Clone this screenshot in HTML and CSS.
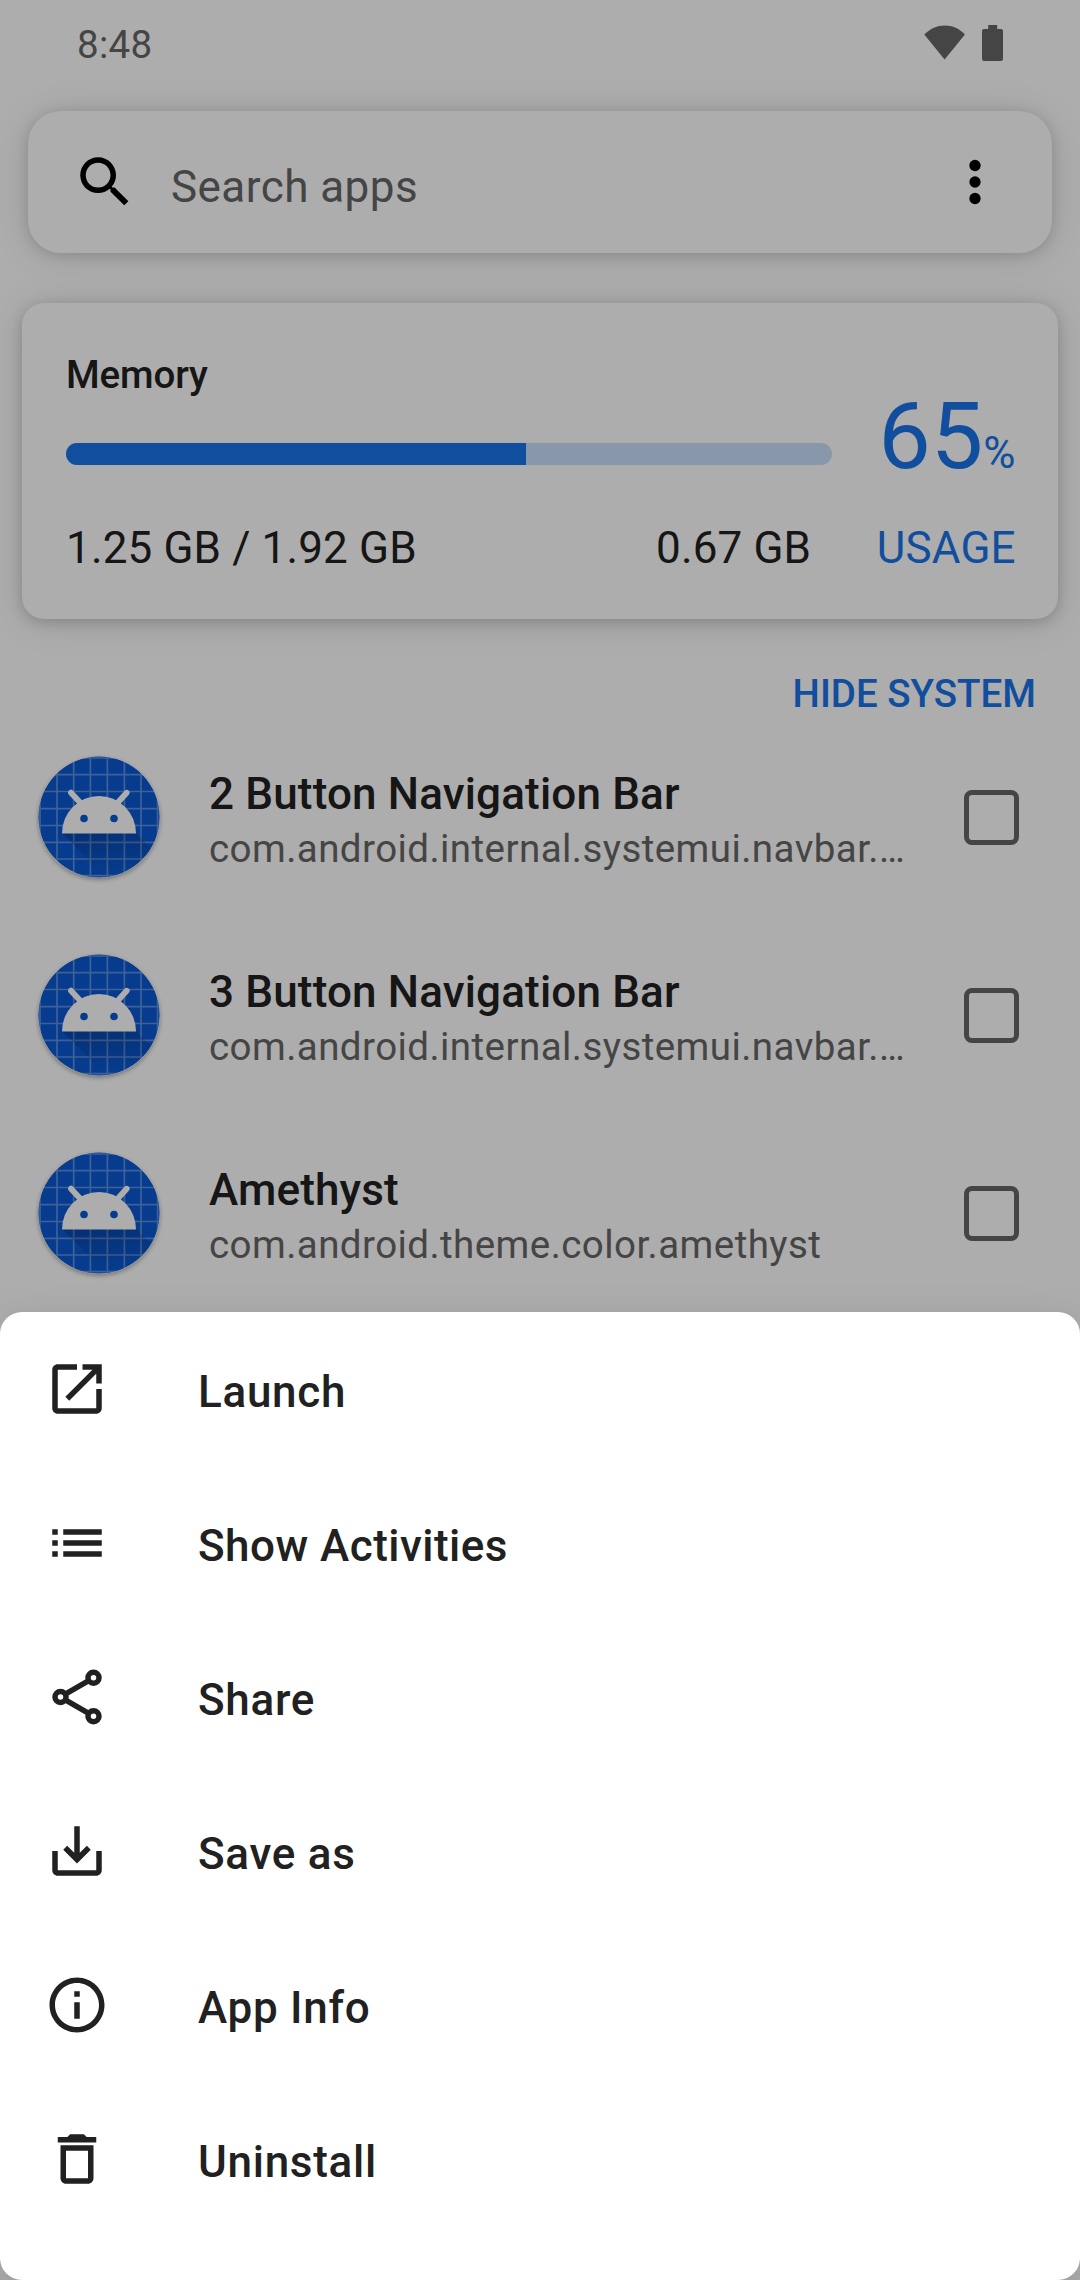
FILE: index.html
```html
<!DOCTYPE html>
<html lang="en">
<head>
<meta charset="utf-8">
<title>Apps</title>
<link rel="stylesheet" href="styles.css">
</head>
<body>
<svg class="defs" width="0" height="0" aria-hidden="true">
  <defs>
    <clipPath id="disc"><circle cx="61" cy="61" r="60.6"/></clipPath>
    <linearGradient id="cast" x1="0" y1="0" x2="0.3" y2="1">
      <stop offset="0" stop-color="#000" stop-opacity=".2"/>
      <stop offset="1" stop-color="#000" stop-opacity="0"/>
    </linearGradient>
    <symbol id="droid" viewBox="0 0 122 122">
      <g clip-path="url(#disc)">
        <rect width="122" height="122" fill="#0a58d2"/>
        <path d="M2 0V122M19 0V122M35.7 0V122M52.4 0V122M69.4 0V122M86.4 0V122M103 0V122M119.6 0V122M0 2H122M0 18.7H122M0 35.5H122M0 52.6H122M0 69.5H122M0 86.3H122M0 103H122M0 119.6H122" stroke="#fff" stroke-opacity=".33" stroke-width="1.7"/>
        <path d="M24 77H98L118 97L98 122H61L50 103Z" fill="url(#cast)"/>
      </g>
      <path d="M33 36.7L43.5 48M88.7 36.7L78.5 48" stroke="#fff" stroke-width="5.8" stroke-linecap="round"/>
      <path d="M24 77.4A37 37.4 0 0 1 98 77.4Z" fill="#fff"/>
      <circle cx="46" cy="62.5" r="3.8" fill="#0a58d2"/>
      <circle cx="76" cy="62.5" r="3.8" fill="#0a58d2"/>
    </symbol>
  </defs>
</svg>

<div class="screen">
  <header class="status">
    <span class="clock">8:48</span>
    <svg class="status-icons" width="80" height="36" viewBox="0 0 80 36">
      <path d="M0.3 9.6C11.500 -2.600 30.500 -2.600 40.900 9.600L20.600 34.500Z"/>
      <path d="M64.200 0h9v4h3.800q2 0 2 2v28q0 2-2 2h-17q-2 0-2-2v-28q0-2 2-2h4.200z"/>
    </svg>
  </header>

  <div class="search">
    <svg class="icon" viewBox="0 0 24 24"><path d="M15.5 14h-.79l-.28-.27C15.410 12.590 16 11.110 16 9.500 16 5.910 13.090 3 9.500 3S3 5.910 3 9.500 5.910 16 9.500 16c1.610 0 3.090-.59 4.230-1.570l.27.28v.79l5 4.990L20.490 19l-4.990-5zm-6 0C7.010 14 5 11.990 5 9.500S7.010 5 9.500 5 14 7.010 14 9.500 11.990 14 9.500 14z"/></svg>
    <span class="search-hint">Search apps</span>
    <svg class="icon" viewBox="0 0 24 24"><circle cx="12" cy="6" r="2.050"/><circle cx="12" cy="12" r="2.050"/><circle cx="12" cy="18" r="2.050"/></svg>
  </div>

  <section class="memory">
    <div class="memory-main">
      <h2 class="memory-title">Memory</h2>
      <div class="track"><div class="fill" style="width: 60%"></div></div>
      <div class="memory-values"><span>1.25 GB / 1.92 GB</span><span>0.67 GB</span></div>
    </div>
    <div class="usage">
      <div class="percent">65<span class="sign">%</span></div>
      <div class="usage-label">USAGE</div>
    </div>
  </section>

  <div class="toggle">HIDE SYSTEM</div>

  <div class="apps">
    <div class="app">
      <svg class="app-icon"><use href="#droid"/></svg>
      <div class="app-text"><div class="app-name">2 Button Navigation Bar</div><div class="app-package">com.android.internal.systemui.navbar.…</div></div>
      <span class="checkbox"></span>
    </div>
    <div class="app">
      <svg class="app-icon"><use href="#droid"/></svg>
      <div class="app-text"><div class="app-name">3 Button Navigation Bar</div><div class="app-package">com.android.internal.systemui.navbar.…</div></div>
      <span class="checkbox"></span>
    </div>
    <div class="app">
      <svg class="app-icon"><use href="#droid"/></svg>
      <div class="app-text"><div class="app-name">Amethyst</div><div class="app-package">com.android.theme.color.amethyst</div></div>
      <span class="checkbox"></span>
    </div>
  </div>
</div>

<div class="scrim">
  <div class="sheet">
    <div class="action">
      <svg class="icon" viewBox="0 0 24 24"><path d="M19 19H5V5h7V3H5c-1.100 0-2 .9-2 2v14c0 1.100.9 2 2 2h14c1.100 0 2-.9 2-2v-7h-2v7zM14 3v2h3.590l-9.830 9.830 1.410 1.410L19 6.410V10h2V3h-7z"/></svg>
      <span class="action-label">Launch</span>
    </div>
    <div class="action">
      <svg class="icon" viewBox="0 0 24 24"><path d="M3 7h2v2H3zM3 11h2v2H3zM3 15h2v2H3zM7 7h14v2H7zM7 11h14v2H7zM7 15h14v2H7z"/></svg>
      <span class="action-label long">Show Activities</span>
    </div>
    <div class="action">
      <svg class="icon line" viewBox="0 0 24 24"><circle cx="18" cy="5" r="2"/><circle cx="6" cy="12" r="2"/><circle cx="18" cy="19" r="2"/><path d="M7.900 10.900L16.100 6.100M7.900 13.100L16.100 17.900"/></svg>
      <span class="action-label">Share</span>
    </div>
    <div class="action">
      <svg class="icon" viewBox="0 0 24 24"><path d="M19 12v7H5v-7H3v7c0 1.100.9 2 2 2h14c1.100 0 2-.9 2-2v-7h-2zM13 12.670l2.590-2.580L17 11.500l-5 5-5-5 1.410-1.410L11 12.670V3h2v9.670z"/></svg>
      <span class="action-label">Save as</span>
    </div>
    <div class="action">
      <svg class="icon" viewBox="0 0 24 24"><path d="M11 7h2v2h-2zM11 11h2v6h-2zM12 2C6.480 2 2 6.480 2 12s4.480 10 10 10 10-4.480 10-10S17.520 2 12 2zm0 18c-4.410 0-8-3.590-8-8s3.590-8 8-8 8 3.590 8 8-3.590 8-8 8z"/></svg>
      <span class="action-label">App Info</span>
    </div>
    <div class="action">
      <svg class="icon" viewBox="0 0 24 24"><path fill-rule="evenodd" d="M15.500 4l-1-1h-5l-1 1H5v2h14V4zM6 7h12v12c0 1.100-.9 2-2 2H8c-1.100 0-2-.9-2-2zM8 9v10h8V9z"/></svg>
      <span class="action-label">Uninstall</span>
    </div>
  </div>
</div>
</body>
</html>
```
FILE: styles.css
```css
* { box-sizing: border-box; }

body {
  margin: 0;
  font-family: Roboto, "Liberation Sans", sans-serif;
  color: #212121;
  background: #fff;
}

.defs { position: absolute; }

.screen {
  width: 1080px;
  height: 2280px;
  overflow: hidden;
}

.icon {
  width: 66px;
  height: 66px;
  flex: none;
  fill: currentColor;
}

.icon.line {
  fill: none;
  stroke: currentColor;
  stroke-width: 2;
}

/* Status bar */
.status {
  display: flex;
  justify-content: space-between;
  height: 94px;
  padding: 0 76px 0 77px;
  color: #666;
}

.clock {
  font-size: 38.5px;
  line-height: 89px;
  letter-spacing: .3px;
}

.status-icons {
  margin-top: 25px;
  fill: currentColor;
}

/* Search */
.search {
  display: flex;
  align-items: center;
  height: 142px;
  margin: 17px 28px 0;
  padding: 0 44px;
  border-radius: 33px;
  background: #fff;
  color: #000;
  box-shadow: 0 3px 36px rgba(0, 0, 0, .13), 0 2px 14px rgba(0, 0, 0, .13);
}

.search-hint {
  flex: 1;
  padding: 10px 0 0 33px;
  font-size: 44px;
  line-height: 52px;
  letter-spacing: .45px;
  color: #666;
}

/* Memory card */
.memory {
  display: flex;
  gap: 44px;
  height: 316px;
  margin: 50px 22px 0;
  padding: 49px 42px 0 44px;
  border-radius: 22px;
  background: #fff;
  box-shadow: 0 3px 36px rgba(0, 0, 0, .13), 0 3px 14px rgba(0, 0, 0, .16);
}

.memory-main { width: 767px; }

.memory-title {
  margin: 0;
  font-size: 38.5px;
  font-weight: 500;
  line-height: 46px;
  letter-spacing: -.1px;
}

.track {
  height: 22px;
  margin-top: 45px;
  overflow: hidden;
  border-radius: 11px;
  background: #c9e0fb;
}

.fill {
  height: 100%;
  background: #1a73e8;
}

.memory-values {
  display: flex;
  justify-content: space-between;
  margin-top: 57px;
  padding-right: 21px;
  font-size: 44px;
  line-height: 52px;
  letter-spacing: .15px;
}

.usage {
  width: 140px;
  color: #1a73e8;
  white-space: nowrap;
}

.percent {
  margin-top: 28px;
  padding-left: 2px;
  font-size: 93.5px;
  line-height: 112px;
}

.sign { font-size: 44px; line-height: 1; }

.usage-label {
  margin-top: 30px;
  padding-left: .5px;
  font-size: 44px;
  line-height: 52px;
  letter-spacing: .2px;
}

.toggle {
  margin: 52px 44px 0 0;
  text-align: right;
  font-size: 38.5px;
  font-weight: 500;
  line-height: 46px;
  color: #1a73e8;
}

/* App list */
.apps {
  display: grid;
  gap: 48px;
  padding: 25px 61px 0 38px;
}

.app {
  display: flex;
  align-items: center;
  height: 150px;
}

.app-icon {
  flex: none;
  width: 122px;
  height: 122px;
  border-radius: 50%;
  box-shadow: 0 2px 4px rgba(0, 0, 0, .3);
}

.app-text {
  flex: 1;
  padding: 6px 0 0 49px;
  white-space: nowrap;
}

.app-name {
  font-size: 44px;
  font-weight: 500;
  line-height: 52px;
  letter-spacing: .16px;
}

.app-package {
  margin-top: 6px;
  font-size: 38.5px;
  line-height: 46px;
  letter-spacing: .44px;
  color: #666;
}

.checkbox {
  width: 55px;
  height: 55px;
  border: 5px solid #666;
  border-radius: 8px;
}

/* Bottom sheet */
.scrim {
  position: absolute;
  inset: 0;
  display: flex;
  flex-direction: column;
  justify-content: flex-end;
  height: 2280px;
  overflow: hidden;
  background: rgba(0, 0, 0, .32);
}

.sheet {
  padding-bottom: 44px;
  border-radius: 22px;
  background: #fff;
  box-shadow: 0 12px 44px rgba(0, 0, 0, .13);
}

.action {
  display: flex;
  align-items: center;
  gap: 88px;
  height: 154px;
  padding: 0 44px;
}

.action-label {
  padding-top: 6px;
  font-size: 44px;
  font-weight: 500;
  line-height: 52px;
  letter-spacing: .72px;
}

.action-label.long { letter-spacing: .48px; }
```
